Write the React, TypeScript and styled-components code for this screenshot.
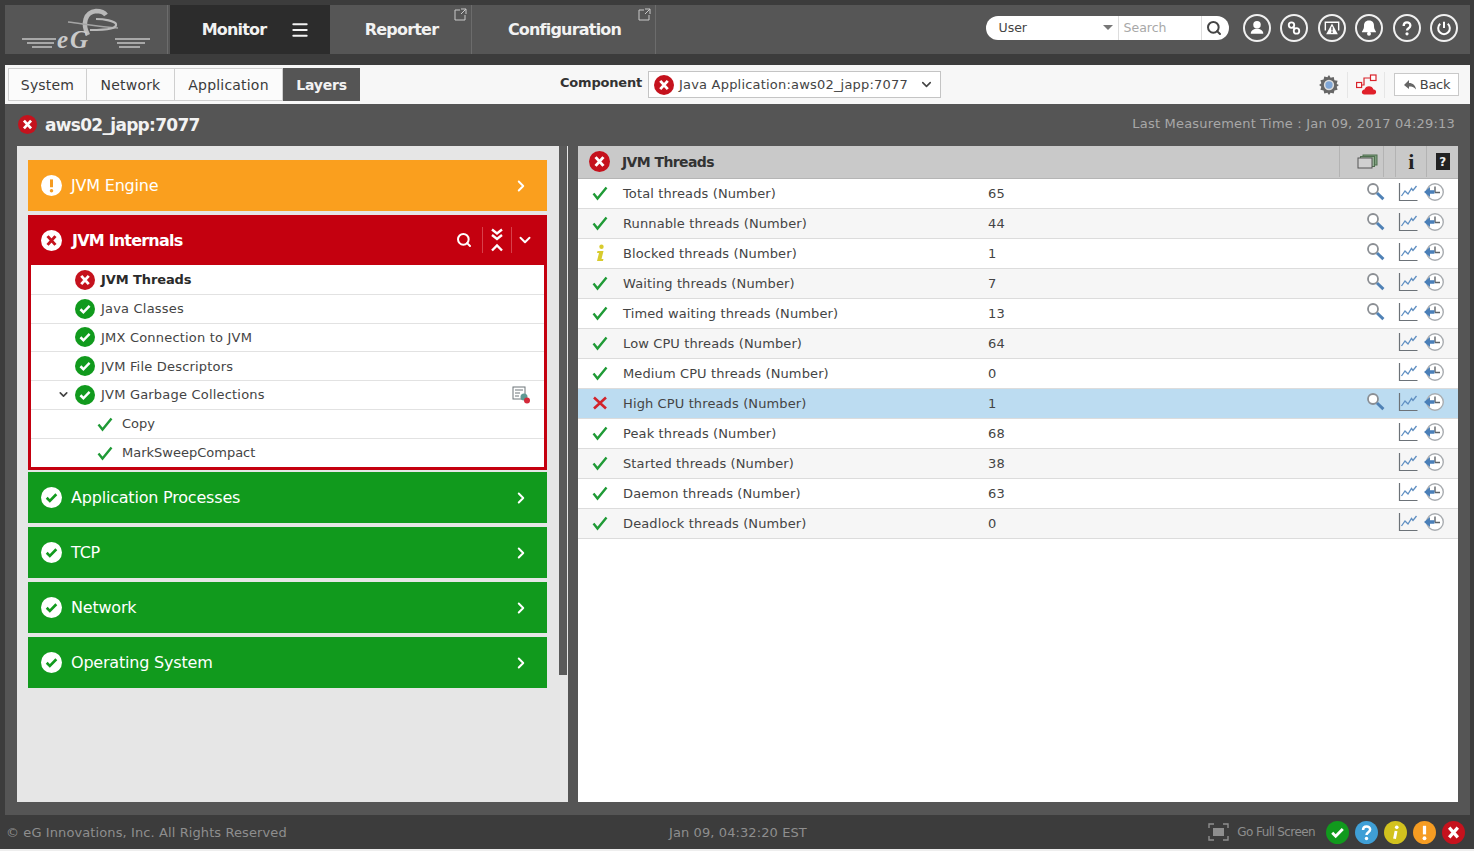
import React from "react";
import styled, { createGlobalStyle } from "styled-components";
import { ChevronDown, ChevronRight, Menu, Search } from "lucide-react";

const FONT = `"DejaVu Sans", Verdana, sans-serif`;

const GlobalStyle = createGlobalStyle`
  html, body {
    margin: 0;
    padding: 0;
    background: #3c3c3c;
    font-family: ${FONT};
  }
  * { box-sizing: border-box; }
`;

type Status = "ok" | "info" | "warn" | "err" | "help";

const statusColors: Record<Status, string> = {
  ok: "#119a1d",
  info: "#d2c21e",
  warn: "#f59c22",
  err: "#c5121d",
  help: "#3f9fd6",
};

/* ---- icons ---- */

const Glyph: React.FC<{ kind: Status; color: string }> = ({ kind, color }) => {
  if (kind === "ok") return <path d="M6.5 12.3l3.6 3.6 7.4-7.6" fill="none" stroke={color} strokeWidth="3" />;
  if (kind === "err") return <path d="M7.5 7l9 10M16.500 7l-9 10" fill="none" stroke={color} strokeWidth="3.400" />;
  if (kind === "warn")
    return (
      <>
        <path d="M12 5v9" stroke={color} strokeWidth="3.4" />
        <circle cx="12" cy="18" r="2" fill={color} />
      </>
    );
  if (kind === "info")
    return (
      <>
        <path d="M12.6 10.5l-1.6 8" stroke={color} strokeWidth="3" />
        <circle cx="13.3" cy="6.6" r="1.9" fill={color} />
      </>
    );
  return (
    <>
      <path d="M8.4 9.3c0-4.6 7.4-4.6 7.4-.4 0 3-3.8 2.7-3.8 5.8" fill="none" stroke={color} strokeWidth="2.6" />
      <circle cx="12" cy="18.3" r="1.8" fill={color} />
    </>
  );
};

const StatusDot: React.FC<{ kind: Status; size?: number; light?: boolean }> = ({ kind, size = 20, light }) => (
  <svg width={size} height={size} viewBox="0 0 24 24" style={{ flex: "none" }}>
    <circle cx="12" cy="12" r="12" fill={light ? "#fff" : statusColors[kind]} />
    <Glyph kind={kind} color={light ? statusColors[kind] : "#fff"} />
  </svg>
);

const Tick: React.FC<{ size?: number }> = ({ size = 16 }) => (
  <svg width={size} height={size} viewBox="0 0 16 16">
    <path d="M1.5 8.5l4 5L14.5 2.5" fill="none" stroke="#1f9a36" strokeWidth="2.4" />
  </svg>
);

const RowMark: React.FC<{ kind: Status }> = ({ kind }) => {
  if (kind === "err")
    return (
      <svg width="16" height="16" viewBox="0 0 16 16">
        <path d="M2 2.5l12 11M14 2.5l-12 11" stroke="#d2232a" strokeWidth="2.6" />
      </svg>
    );
  if (kind === "info")
    return (
      <svg width="16" height="18" viewBox="0 0 16 18">
        <circle cx="9.5" cy="2.8" r="2.2" fill="#d8cb2d" />
        <path d="M5.5 7h6l-2 8h2l-.6 2H5l2-8H5z" fill="#d8cb2d" />
      </svg>
    );
  return <Tick />;
};

const Magnifier = () => (
  <svg width="19" height="19" viewBox="0 0 19 19">
    <circle cx="7" cy="7" r="5" fill="#fff" stroke="#8b8f94" strokeWidth="1.8" />
    <path d="M11 11l6.4 6.2" stroke="#4f81b5" strokeWidth="3" />
  </svg>
);

const TrendChart = () => (
  <svg width="20" height="20" viewBox="0 0 20 20">
    <path d="M1.5 1v17.5H19.5" fill="none" stroke="#6c7278" strokeWidth="1.2" />
    <path d="M3.5 14l3.5-5 3 3 3.500-5.500 1.500 2 3.500-4.500" fill="none" stroke="#5f8fc2" strokeWidth="1.3" />
  </svg>
);

const HistoryClock = () => (
  <svg width="22" height="20" viewBox="0 0 22 20">
    <circle cx="12" cy="10" r="8.300" fill="#fff" stroke="#a9adb1" strokeWidth="1.4" />
    <path d="M12 4.500v6M12 10.500h5" stroke="#5d6368" strokeWidth="1.400" />
    <path d="M1 10l6-5v3.300h4.500v3.400H7V15z" fill="#4a7fb8" />
  </svg>
);

const CollapseAll = () => (
  <svg width="14" height="24" viewBox="0 0 14 24" style={{ flex: "none" }}>
    <path d="M2 1.500l5 4 5-4M2 7l5 4 5-4M2 22.500l5-5 5 5" fill="none" stroke="#fff" strokeWidth="2.400" />
  </svg>
);

const LogoMark = () => (
  <svg width="130" height="46" viewBox="0 0 130 46">
    <path d="M66 27C60 16 63 4 74 3c4 0 8 1 10 4" fill="none" stroke="#b9b9b9" strokeWidth="4.500" />
    <path d="M46 14c16 2 34 5 50 6" fill="none" stroke="#a5a5a5" strokeWidth="1.500" />
    <path d="M74 11c8 0 19 2 20 5 1 4-6 6-26 6" fill="none" stroke="#b9b9b9" strokeWidth="2.200" />
    <path d="M0 31h34M5 35h27M10 39h20M93 31h35M95 35h28M97 39h21" stroke="#a8a8a8" strokeWidth="1.900" />
    <text x="35" y="40" fontFamily="Liberation Serif, serif" fontStyle="italic" fontWeight="700" fontSize="25" letterSpacing="2" fill="#cacaca">
      eG
    </text>
  </svg>
);

const PopOut = () => (
  <svg width="13" height="13" viewBox="0 0 13 13">
    <path d="M6 2H1v10h10V7" fill="none" stroke="#c8c8c8" strokeWidth="1" />
    <path d="M7 1h5v5M12 1L7 6" fill="none" stroke="#c8c8c8" strokeWidth="1" />
  </svg>
);

const roundIcons: React.ReactNode[] = [
  <>
    <circle cx="12" cy="8" r="4.500" fill="#fff" />
    <path d="M4.500 19c0-8 15-8 15 0z" fill="#fff" />
  </>,
  <>
    <circle cx="9" cy="8.500" r="3.300" fill="none" stroke="#fff" strokeWidth="2.200" />
    <circle cx="15" cy="15.500" r="3.300" fill="none" stroke="#fff" strokeWidth="2.200" />
    <path d="M10.500 10.500l3 3" stroke="#fff" strokeWidth="2.200" />
  </>,
  <>
    <path d="M4 15V5h16v10" fill="none" stroke="#fff" strokeWidth="1.700" />
    <path d="M12 6.500l7 13H5z" fill="#fff" />
    <path d="M12 10.500v4.500M12 16v2" stroke="#565656" strokeWidth="1.700" />
  </>,
  <>
    <path d="M12 3c-4.500 0-6 3-6 6.500 0 4.500-2.500 6-2.500 7.500h17c0-1.500-2.500-3-2.500-7.500C18 6 16.500 3 12 3z" fill="#fff" />
    <circle cx="12" cy="19" r="2.400" fill="#fff" />
  </>,
  <>
    <path d="M8 9.500c0-5.500 8-5.500 8-.5 0 3.500-4 3-4 6" fill="none" stroke="#fff" strokeWidth="2.800" />
    <circle cx="12" cy="19" r="1.900" fill="#fff" />
  </>,
  <>
    <path d="M7.500 7a7 7 0 1 0 9 0" fill="none" stroke="#fff" strokeWidth="2.400" />
    <path d="M12 4.500v7.500" stroke="#fff" strokeWidth="2.400" />
  </>,
];

/* ---- shell ---- */

const Page = styled.div`
  width: 1474px;
  height: 851px;
  overflow: hidden;
  display: flex;
  flex-direction: column;
  background: #3c3c3c;
  font-family: ${FONT};
`;

const TopBar = styled.header`
  height: 49px;
  margin: 5px 4px 11px 5px;
  flex: none;
  display: flex;
  align-items: stretch;
  background: #565656;
`;

const LogoCell = styled.div`
  width: 163px;
  padding: 3px 0 0 17px;
  border-right: 1px solid #6c6c6c;
`;

const NavItem = styled.div<{ $active?: boolean; $w: number }>`
  position: relative;
  width: ${(p) => p.$w}px;
  margin-right: 2px;
  padding-left: ${(p) => (p.$active ? "12px" : "0")};
  display: flex;
  align-items: center;
  justify-content: center;
  gap: 24px;
  color: #f2f2f2;
  font-size: 16px;
  font-weight: 700;
  letter-spacing: -0.8px;
  background: ${(p) => (p.$active ? "#2c2c2c" : "transparent")};
  border-right: ${(p) => (p.$active ? "none" : "1px solid #6c6c6c")};
  margin-left: ${(p) => (p.$active ? "2px" : "0")};
`;

const PopCorner = styled.span`
  position: absolute;
  top: 3px;
  right: 4px;
  line-height: 0;
`;

const TopRight = styled.div`
  margin-left: auto;
  display: flex;
  align-items: center;
  padding: 0 12px 4px 0;
`;

const SearchPill = styled.div`
  width: 243px;
  height: 24px;
  margin-right: 14px;
  display: flex;
  align-items: center;
  background: #fff;
  border-radius: 12px;
  overflow: hidden;
  font-size: 12.500px;
`;

const UserField = styled.div`
  width: 132px;
  padding-left: 13px;
  display: flex;
  align-items: center;
  justify-content: space-between;
  color: #444;
`;

const Caret = styled.span`
  width: 0;
  height: 0;
  margin-right: 5px;
  border-left: 5px solid transparent;
  border-right: 5px solid transparent;
  border-top: 5px solid #777;
`;

const SearchField = styled.div`
  width: 84px;
  height: 100%;
  padding-left: 5px;
  display: flex;
  align-items: center;
  color: #a8a8a8;
  border-left: 1px solid #ddd;
  border-right: 1px solid #ddd;
`;

const SearchBtn = styled.div`
  flex: 1;
  display: flex;
  justify-content: center;
  padding-right: 3px;
  color: #444;
`;

const RoundBtn = styled.div`
  width: 28px;
  height: 28px;
  margin-right: 9.500px;
  display: flex;
  align-items: center;
  justify-content: center;
  border: 2px solid #f0f0f0;
  border-radius: 50%;
  &:last-child { margin-right: 0; }
`;

const ToolBar = styled.div`
  height: 39px;
  margin: 0 4px 0 5px;
  flex: none;
  display: flex;
  align-items: center;
  background: #f7f7f7;
  padding: 0 11px 0 3px;
`;

const Tabs = styled.div`
  display: flex;
  height: 33px;
  width: 352px;
`;

const TabItem = styled.div<{ $active?: boolean; $w: number }>`
  width: ${(p) => p.$w}px;
  display: flex;
  align-items: center;
  justify-content: center;
  font-size: 14px;
  letter-spacing: ${(p) => (p.$active ? "-0.2px" : "0.2px")};
  font-weight: ${(p) => (p.$active ? 700 : 400)};
  color: ${(p) => (p.$active ? "#f2f2f2" : "#3a3a3a")};
  background: ${(p) => (p.$active ? "#555" : "#fbfbfb")};
  border: 1px solid ${(p) => (p.$active ? "#555" : "#cfcfcf")};
  border-left-width: ${(p) => (p.$active ? "1px" : "0")};
  &:first-child { border-left-width: 1px; }
`;

const CompLabel = styled.label`
  margin-left: 200px;
  margin-top: -4px;
  font-size: 13px;
  font-weight: 700;
  letter-spacing: -0.2px;
  color: #333;
  width: 88px;
`;

const CompSelect = styled.div`
  width: 293px;
  height: 27px;
  padding: 0 6px 0 5px;
  display: flex;
  align-items: center;
  gap: 5px;
  background: #fff;
  border: 1px solid #c4c4c4;
  font-size: 13px;
  color: #444;
  letter-spacing: 0.2px;
`;

const SelectText = styled.span`
  flex: 1;
  white-space: nowrap;
`;

const ToolRight = styled.div`
  margin-left: auto;
  display: flex;
  align-items: center;
`;

const ToolIcon = styled.div`
  width: 37px;
  height: 26px;
  display: flex;
  align-items: center;
  justify-content: center;
  border-right: 1px solid #e6e6e6;
`;

const BackBtn = styled.div`
  width: 65px;
  height: 23px;
  margin-left: 9px;
  display: flex;
  align-items: center;
  justify-content: center;
  gap: 3px;
  background: #fff;
  border: 1px solid #c9c9c9;
  font-size: 13px;
  letter-spacing: -0.3px;
  color: #444;
`;

const Main = styled.main`
  flex: 1;
  margin: 0 4px 0 5px;
  min-height: 0;
  display: flex;
  flex-direction: column;
  background: #555;
`;

const TitleBar = styled.div`
  height: 42px;
  flex: none;
  padding: 0 15px 1px 13px;
  display: flex;
  align-items: center;
  gap: 8px;
`;

const TitleName = styled.h1`
  margin: 0;
  font-size: 17px;
  font-weight: 700;
  letter-spacing: -0.7px;
  color: #f2f2f2;
`;

const Measured = styled.div`
  margin: -2px 0 0 auto;
  font-size: 13px;
  letter-spacing: 0.2px;
  color: #a8a8a8;
`;

const Panels = styled.div`
  height: 656px;
  flex: none;
  display: flex;
  padding: 0 12px;
  gap: 10px;
`;

/* ---- left ---- */

const LeftPanel = styled.section`
  width: 551px;
  display: flex;
  background: #e6e6e6;
`;

const Accordion = styled.div`
  width: 519px;
  margin: 14px 0 0 11px;
  display: flex;
  flex-direction: column;
  gap: 4px;
`;

const ScrollTrack = styled.div`
  width: 8px;
  margin-left: 12px;
  background: #e6e6e6;
`;

const ScrollThumb = styled.div`
  height: 529px;
  background: #5a5a5a;
`;

const Bar = styled.div<{ $kind: Status; $short?: boolean }>`
  height: ${(p) => (p.$short ? 50 : 51)}px;
  padding: 0 ${(p) => (p.$short ? 13 : 17)}px 0 13px;
  display: flex;
  align-items: center;
  gap: 9px;
  background: ${(p) => (p.$kind === "err" ? "#c4000f" : p.$kind === "warn" ? "#fa9f1e" : "#119a1d")};
  color: #fff;
  font-size: 16px;
  letter-spacing: -0.2px;
`;

const BarName = styled.span<{ $bold?: boolean }>`
  flex: 1;
  font-weight: ${(p) => (p.$bold ? 700 : 400)};
  letter-spacing: ${(p) => (p.$bold ? "-0.8px" : "-0.2px")};
  margin-left: ${(p) => (p.$bold ? "1px" : "0")};
`;

const BarTools = styled.div`
  display: flex;
  align-items: center;
`;

const BarTool = styled.span<{ $pad: number }>`
  display: flex;
  align-items: center;
  height: 26px;
  padding: 0 7px 0 ${(p) => p.$pad}px;
  border-left: 1px solid #d8404a;
  &:last-child { padding-right: 0; }
`;

const BarSearch = styled.span`
  display: flex;
  margin-right: 10px;
`;

const Expanded = styled.div`
  display: flex;
  flex-direction: column;
  margin-bottom: -2px;
`;

const TreeBox = styled.div`
  padding-top: 1px;
  border: 3px solid #c4000f;
  border-top: 0;
  background: #fff;
`;

const TreeRow = styled.div<{ $indent: number }>`
  height: 28.750px;
  padding-left: ${(p) => p.$indent}px;
  padding-right: 13px;
  display: flex;
  align-items: center;
  gap: 6px;
  border-bottom: 1px solid #e2e2e2;
  font-size: 13px;
  letter-spacing: 0.2px;
  color: #444;
  &:last-child { border-bottom: 0; }
`;

const TreeText = styled.span<{ $bold?: boolean }>`
  flex: 1;
  font-weight: ${(p) => (p.$bold ? 700 : 400)};
  letter-spacing: ${(p) => (p.$bold ? "-0.1px" : "0.2px")};
  color: ${(p) => (p.$bold ? "#2a2a2a" : "#444")};
`;

const LeafText = styled(TreeText)`
  margin-left: 3px;
  letter-spacing: 0;
`;

/* ---- right ---- */

const RightPanel = styled.section`
  width: 880px;
  background: #fff;
`;

const GridHead = styled.div`
  height: 33px;
  padding: 0 0 1px 11px;
  display: flex;
  align-items: center;
  background: #c9c9c9;
  border-bottom: 1px solid #b5b5b5;
  font-size: 14px;
  font-weight: 700;
  letter-spacing: -0.6px;
  color: #333;
`;

const HeadTitle = styled.span`
  flex: 1;
  margin-left: 12px;
`;

const HeadCell = styled.span<{ $w: number; $pl?: number }>`
  width: ${(p) => p.$w}px;
  height: 100%;
  padding-left: ${(p) => p.$pl ?? 0}px;
  display: flex;
  align-items: center;
  justify-content: center;
  border-left: 1px solid #b3b3b3;
`;

const InfoMark = styled.span`
  font-family: "Liberation Serif", serif;
  font-size: 22px;
  color: #222;
`;

const HelpMark = styled.span`
  width: 14px;
  height: 17px;
  display: flex;
  align-items: center;
  justify-content: center;
  background: #222;
  color: #eee;
  font-size: 12px;
`;

const MetricRow = styled.div<{ $hl?: boolean; $alt?: boolean }>`
  height: 30px;
  display: grid;
  grid-template-columns: 45px 365px 377px 20px 33px 40px;
  align-items: center;
  font-size: 13px;
  letter-spacing: 0.12px;
  color: #444;
  background: ${(p) => (p.$hl ? "#bcdcf1" : p.$alt ? "#f6f6f6" : "#fff")};
  border-bottom: 1px solid #dcdcdc;
`;

const MarkCell = styled.span`
  display: flex;
  justify-content: center;
  margin: -2px 2px 0 0;
  line-height: 0;
`;

const IconCell = styled.span<{ $align?: string; $pl?: number }>`
  display: flex;
  justify-content: ${(p) => p.$align ?? "center"};
  padding-left: ${(p) => p.$pl ?? 0}px;
  line-height: 0;
  margin-top: -4px;
`;

/* ---- footer ---- */

const Footer = styled.footer`
  flex: none;
  height: 34px;
  padding: 0 9px 0 6px;
  display: flex;
  align-items: center;
  font-size: 13px;
  letter-spacing: 0.1px;
  color: #8e8e8e;
`;

const BottomEdge = styled.div`
  flex: none;
  height: 2px;
  background: #eee;
`;

const FootCopy = styled.span`
  width: 663px;
`;

const FootRight = styled.div`
  margin-left: auto;
  display: flex;
  align-items: center;
  gap: 6px;
`;

const FullScreen = styled.span`
  display: flex;
  align-items: center;
  gap: 8px;
  margin-right: 5px;
  font-size: 12px;
  letter-spacing: -0.6px;
`;

/* ---- data ---- */

const bars: { name: string; kind: Status }[] = [
  { name: "Application Processes", kind: "ok" },
  { name: "TCP", kind: "ok" },
  { name: "Network", kind: "ok" },
  { name: "Operating System", kind: "ok" },
];

const metrics: { label: string; value: number; kind: Status; zoom?: boolean; hl?: boolean }[] = [
  { label: "Total threads (Number)", value: 65, kind: "ok", zoom: true },
  { label: "Runnable threads (Number)", value: 44, kind: "ok", zoom: true },
  { label: "Blocked threads (Number)", value: 1, kind: "info", zoom: true },
  { label: "Waiting threads (Number)", value: 7, kind: "ok", zoom: true },
  { label: "Timed waiting threads (Number)", value: 13, kind: "ok", zoom: true },
  { label: "Low CPU threads (Number)", value: 64, kind: "ok" },
  { label: "Medium CPU threads (Number)", value: 0, kind: "ok" },
  { label: "High CPU threads (Number)", value: 1, kind: "err", zoom: true, hl: true },
  { label: "Peak threads (Number)", value: 68, kind: "ok" },
  { label: "Started threads (Number)", value: 38, kind: "ok" },
  { label: "Daemon threads (Number)", value: 63, kind: "ok" },
  { label: "Deadlock threads (Number)", value: 0, kind: "ok" },
];

export default function App() {
  return (
    <Page>
      <GlobalStyle />
      <TopBar>
        <LogoCell>
          <LogoMark />
        </LogoCell>
        <NavItem $active $w={160}>
          Monitor <Menu size={20} strokeWidth={2.4} />
        </NavItem>
        <NavItem $w={140}>
          Reporter
          <PopCorner>
            <PopOut />
          </PopCorner>
        </NavItem>
        <NavItem $w={182}>
          Configuration
          <PopCorner>
            <PopOut />
          </PopCorner>
        </NavItem>
        <TopRight>
          <SearchPill>
            <UserField>
              User
              <Caret />
            </UserField>
            <SearchField>Search</SearchField>
            <SearchBtn>
              <Search size={16} strokeWidth={3} />
            </SearchBtn>
          </SearchPill>
          {roundIcons.map((icon, i) => (
            <RoundBtn key={i}>
              <svg width="20" height="20" viewBox="0 0 24 24">
                {icon}
              </svg>
            </RoundBtn>
          ))}
        </TopRight>
      </TopBar>

      <ToolBar>
        <Tabs>
          <TabItem $w={79}>System</TabItem>
          <TabItem $w={88}>Network</TabItem>
          <TabItem $w={108}>Application</TabItem>
          <TabItem $active $w={77}>
            Layers
          </TabItem>
        </Tabs>
        <CompLabel>Component</CompLabel>
        <CompSelect>
          <StatusDot kind="err" size={20} />
          <SelectText>Java Application:aws02_japp:7077</SelectText>
          <ChevronDown size={15} strokeWidth={2.5} />
        </CompSelect>
        <ToolRight>
          <ToolIcon>
            <svg width="22" height="22" viewBox="0 0 20 20">
              <path
                d="M10 1l1.500 2.500 2.800-.8.600 2.900 2.900.6-.8 2.800L19 10l-2 1.500.8 2.800-2.900.6-.6 2.900-2.800-.8L10 19l-1.500-2-2.800.8-.6-2.900-2.900-.6.8-2.800L1 10l2-1.500-.8-2.800 2.900-.6.600-2.900 2.800.8z"
                fill="#666"
              />
              <circle cx="10" cy="10" r="4" fill="#7fa6d6" stroke="#ddd" strokeWidth="1.400" />
            </svg>
          </ToolIcon>
          <ToolIcon>
            <svg width="21" height="21" viewBox="0 0 21 21">
              <path d="M5.500 11H8V4h6.500" fill="none" stroke="#d9232b" strokeWidth="1.200" />
              <rect x="0.600" y="8.500" width="5" height="5" fill="#fff" stroke="#d9232b" strokeWidth="1.200" />
              <rect x="14.500" y="1" width="5.500" height="5.500" fill="#fff" stroke="#d9232b" strokeWidth="1.200" />
              <path d="M8.500 20.500c-3.500 0-3.500-4.500 0-5 1-4.500 8-4.500 9 0 3.500 0 3.500 5 0 5z" fill="#e0202a" />
            </svg>
          </ToolIcon>
          <BackBtn>
            <svg width="14" height="12" viewBox="0 0 14 12">
              <path d="M6 1L1 6l5 4V7.500c3 0 5 .5 7 3-.5-4-3-6.500-7-6.500z" fill="#666" />
            </svg>
            Back
          </BackBtn>
        </ToolRight>
      </ToolBar>

      <Main>
        <TitleBar>
          <StatusDot kind="err" size={19} />
          <TitleName>aws02_japp:7077</TitleName>
          <Measured>Last Measurement Time : Jan 09, 2017 04:29:13</Measured>
        </TitleBar>

        <Panels>
          <LeftPanel>
            <Accordion>
              <Bar $kind="warn">
                <StatusDot kind="warn" size={21} light />
                <BarName>JVM Engine</BarName>
                <ChevronRight size={18} strokeWidth={2.6} />
              </Bar>
              <Expanded>
                <Bar $kind="err" $short>
                  <StatusDot kind="err" size={21} light />
                  <BarName $bold>JVM Internals</BarName>
                  <BarTools>
                    <BarSearch>
                      <Search size={16} strokeWidth={3} />
                    </BarSearch>
                    <BarTool $pad={7}>
                      <CollapseAll />
                    </BarTool>
                    <BarTool $pad={4}>
                      <ChevronDown size={18} strokeWidth={2.6} />
                    </BarTool>
                  </BarTools>
                </Bar>
                <TreeBox>
                  <TreeRow $indent={44}>
                    <StatusDot kind="err" size={20} />
                    <TreeText $bold>JVM Threads</TreeText>
                  </TreeRow>
                  <TreeRow $indent={44}>
                    <StatusDot kind="ok" size={20} />
                    <TreeText>Java Classes</TreeText>
                  </TreeRow>
                  <TreeRow $indent={44}>
                    <StatusDot kind="ok" size={20} />
                    <TreeText>JMX Connection to JVM</TreeText>
                  </TreeRow>
                  <TreeRow $indent={44}>
                    <StatusDot kind="ok" size={20} />
                    <TreeText>JVM File Descriptors</TreeText>
                  </TreeRow>
                  <TreeRow $indent={26}>
                    <ChevronDown size={13} strokeWidth={3} color="#444" style={{ marginRight: -1 }} />
                    <StatusDot kind="ok" size={20} />
                    <TreeText>JVM Garbage Collections</TreeText>
                    <svg width="19" height="18" viewBox="0 0 19 18">
                      <rect x="1" y="1" width="12" height="12" fill="#fff" stroke="#6d7478" />
                      <path d="M3 4h8M3 7h5M3 10h4" stroke="#6d7478" />
                      <circle cx="12" cy="11" r="3.500" fill="#5f9a94" />
                      <circle cx="15" cy="14.500" r="3" fill="#d42a3a" />
                    </svg>
                  </TreeRow>
                  <TreeRow $indent={66}>
                    <Tick />
                    <LeafText>Copy</LeafText>
                  </TreeRow>
                  <TreeRow $indent={66}>
                    <Tick />
                    <LeafText>MarkSweepCompact</LeafText>
                  </TreeRow>
                </TreeBox>
              </Expanded>
              {bars.map((b) => (
                <Bar key={b.name} $kind={b.kind}>
                  <StatusDot kind={b.kind} size={21} light />
                  <BarName>{b.name}</BarName>
                  <ChevronRight size={18} strokeWidth={2.6} />
                </Bar>
              ))}
            </Accordion>
            <ScrollTrack>
              <ScrollThumb />
            </ScrollTrack>
          </LeftPanel>

          <RightPanel>
            <GridHead>
              <StatusDot kind="err" size={21} />
              <HeadTitle>JVM Threads</HeadTitle>
              <HeadCell $w={44} $pl={12}>
                <svg width="21" height="15" viewBox="0 0 21 15">
                  <rect x="6" y="1" width="14" height="10" fill="#7f9f7f" stroke="#4f6f4f" />
                  <rect x="3.500" y="2.500" width="14" height="10" fill="#94b094" stroke="#4f6f4f" />
                  <rect x="1" y="4" width="14" height="10" fill="#d0d0d0" stroke="#555" />
                </svg>
              </HeadCell>
              <HeadCell $w={12} />
              <HeadCell $w={31}>
                <InfoMark>i</InfoMark>
              </HeadCell>
              <HeadCell $w={32}>
                <HelpMark>?</HelpMark>
              </HeadCell>
            </GridHead>
            {metrics.map((m, i) => (
              <MetricRow key={m.label} $hl={m.hl} $alt={i % 2 === 1}>
                <MarkCell>
                  <RowMark kind={m.kind} />
                </MarkCell>
                <span>{m.label}</span>
                <span>{m.value}</span>
                <IconCell>{m.zoom && <Magnifier />}</IconCell>
                <IconCell $align="flex-end">
                  <TrendChart />
                </IconCell>
                <IconCell $align="flex-start" $pl={5}>
                  <HistoryClock />
                </IconCell>
              </MetricRow>
            ))}
          </RightPanel>
        </Panels>
      </Main>

      <Footer>
        <FootCopy>© eG Innovations, Inc. All Rights Reserved</FootCopy>
        <span>Jan 09, 04:32:20 EST</span>
        <FootRight>
          <FullScreen>
            <svg width="21" height="18" viewBox="0 0 21 18">
              <path d="M1 5V1h5M15 1h5v4M20 13v4h-5M6 17H1v-4" fill="none" stroke="#8e8e8e" strokeWidth="1.400" />
              <rect x="5" y="5" width="11" height="8" fill="#8e8e8e" />
            </svg>
            Go Full Screen
          </FullScreen>
          <StatusDot kind="ok" size={23} />
          <StatusDot kind="help" size={23} />
          <StatusDot kind="info" size={23} />
          <StatusDot kind="warn" size={23} />
          <StatusDot kind="err" size={23} />
        </FootRight>
      </Footer>
      <BottomEdge />
    </Page>
  );
}
